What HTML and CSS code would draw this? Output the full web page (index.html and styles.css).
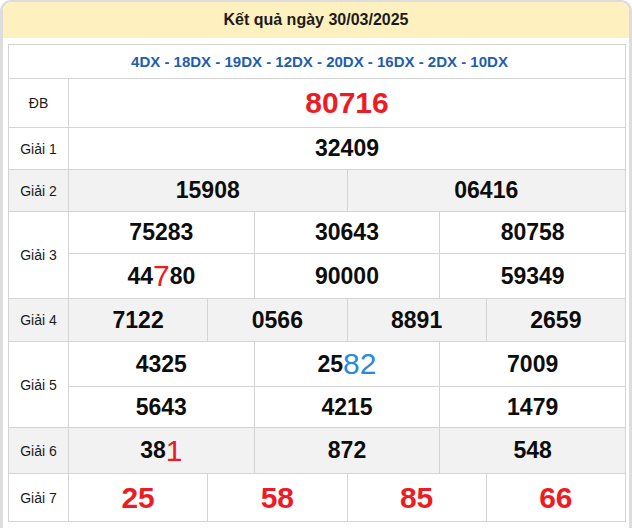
FILE: index.html
```html
<!DOCTYPE html>
<html lang="vi">
<head>
<meta charset="utf-8">
<title>Kết quả ngày 30/03/2025</title>
<link rel="stylesheet" href="styles.css">
</head>
<body>
<div class="box">
  <div class="head">Kết quả ngày 30/03/2025</div>
  <div class="tbl">
    <div class="codes">4DX - 18DX - 19DX - 12DX - 20DX - 16DX - 2DX - 10DX</div>

    <div class="prize">
      <div class="lbl">ĐB</div>
      <div class="nums cols-1 h-db">
        <div class="num big red">80716</div>
      </div>
    </div>

    <div class="prize">
      <div class="lbl">Giải 1</div>
      <div class="nums cols-1 h-g1">
        <div class="num">32409</div>
      </div>
    </div>

    <div class="prize alt">
      <div class="lbl">Giải 2</div>
      <div class="nums cols-2 h-g2">
        <div class="num">15908</div>
        <div class="num">06416</div>
      </div>
    </div>

    <div class="prize">
      <div class="lbl">Giải 3</div>
      <div class="nums cols-3 h-g3">
        <div class="num">75283</div>
        <div class="num">30643</div>
        <div class="num">80758</div>
        <div class="num">44<span class="hl red">7</span>80</div>
        <div class="num">90000</div>
        <div class="num">59349</div>
      </div>
    </div>

    <div class="prize alt">
      <div class="lbl">Giải 4</div>
      <div class="nums cols-4 h-g4">
        <div class="num">7122</div>
        <div class="num">0566</div>
        <div class="num">8891</div>
        <div class="num">2659</div>
      </div>
    </div>

    <div class="prize">
      <div class="lbl">Giải 5</div>
      <div class="nums cols-3 h-g5">
        <div class="num">4325</div>
        <div class="num">25<span class="hl blue">82</span></div>
        <div class="num">7009</div>
        <div class="num">5643</div>
        <div class="num">4215</div>
        <div class="num">1479</div>
      </div>
    </div>

    <div class="prize alt">
      <div class="lbl">Giải 6</div>
      <div class="nums cols-3 h-g6">
        <div class="num">38<span class="hl red">1</span></div>
        <div class="num">872</div>
        <div class="num">548</div>
      </div>
    </div>

    <div class="prize">
      <div class="lbl">Giải 7</div>
      <div class="nums cols-4 h-g7">
        <div class="num big red">25</div>
        <div class="num big red">58</div>
        <div class="num big red">85</div>
        <div class="num big red">66</div>
      </div>
    </div>
  </div>
</div>
</body>
</html>
```

FILE: styles.css
```css
* {
  box-sizing: border-box;
}

html, body {
  margin: 0;
  padding: 0;
  background: #ffffff;
}

body {
  font-family: "Liberation Sans", Arial, sans-serif;
  color: #111111;
}

.box {
  width: 632px;
  height: 540px;
  border: 3px solid #dddddd;
  border-top-width: 2px;
  border-bottom: none;
  border-radius: 11px 11px 0 0;
  padding: 0 3px 0 5px;
  background: #ffffff;
}

.head {
  margin: 0 -3px 6px -5px;
  height: 36px;
  background: #fff1bf;
  border-radius: 9px 9px 0 0;
  display: flex;
  align-items: center;
  justify-content: center;
  font-size: 16px;
  font-weight: bold;
  color: #1c1c1c;
}

.tbl {
  width: 618px;
  border-top: 1px solid #d4d4d4;
  border-left: 1px solid #d4d4d4;
}

.codes {
  height: 34px;
  border-right: 1px solid #d4d4d4;
  border-bottom: 1px solid #d4d4d4;
  display: flex;
  align-items: center;
  justify-content: center;
  font-size: 15px;
  font-weight: bold;
  color: #1f5eab;
  padding-left: 5px;
}

.prize {
  display: grid;
  grid-template-columns: 60px 1fr;
}

.prize.alt {
  background: #f2f2f2;
}

.lbl {
  border-right: 1px solid #d4d4d4;
  border-bottom: 1px solid #d4d4d4;
  display: flex;
  align-items: center;
  justify-content: center;
  font-size: 14px;
  color: #1a1a1a;
}

.nums {
  display: grid;
}

.cols-1 { grid-template-columns: 1fr; }
.cols-2 { grid-template-columns: repeat(2, 1fr); }
.cols-3 { grid-template-columns: repeat(3, 1fr); }
.cols-4 { grid-template-columns: repeat(4, 1fr); }

.h-db { grid-template-rows: 49px; }
.h-g1 { grid-template-rows: 42px; }
.h-g2 { grid-template-rows: 42px; }
.h-g3 { grid-template-rows: 42px 45px; }
.h-g4 { grid-template-rows: 43px; }
.h-g5 { grid-template-rows: 45px 41px; }
.h-g6 { grid-template-rows: 46px; }
.h-g7 { grid-template-rows: 48px; }

.num {
  border-right: 1px solid #d4d4d4;
  border-bottom: 1px solid #d4d4d4;
  display: flex;
  align-items: center;
  justify-content: center;
  font-size: 23px;
  font-weight: bold;
  color: #0d0d0d;
}

.num.big {
  font-size: 30px;
}

.red {
  color: #ed1c24;
}

.num.red {
  color: #ed1c24;
}

.hl {
  font-size: 30px;
  font-weight: normal;
}

.hl.blue {
  color: #2b89e0;
}
```
